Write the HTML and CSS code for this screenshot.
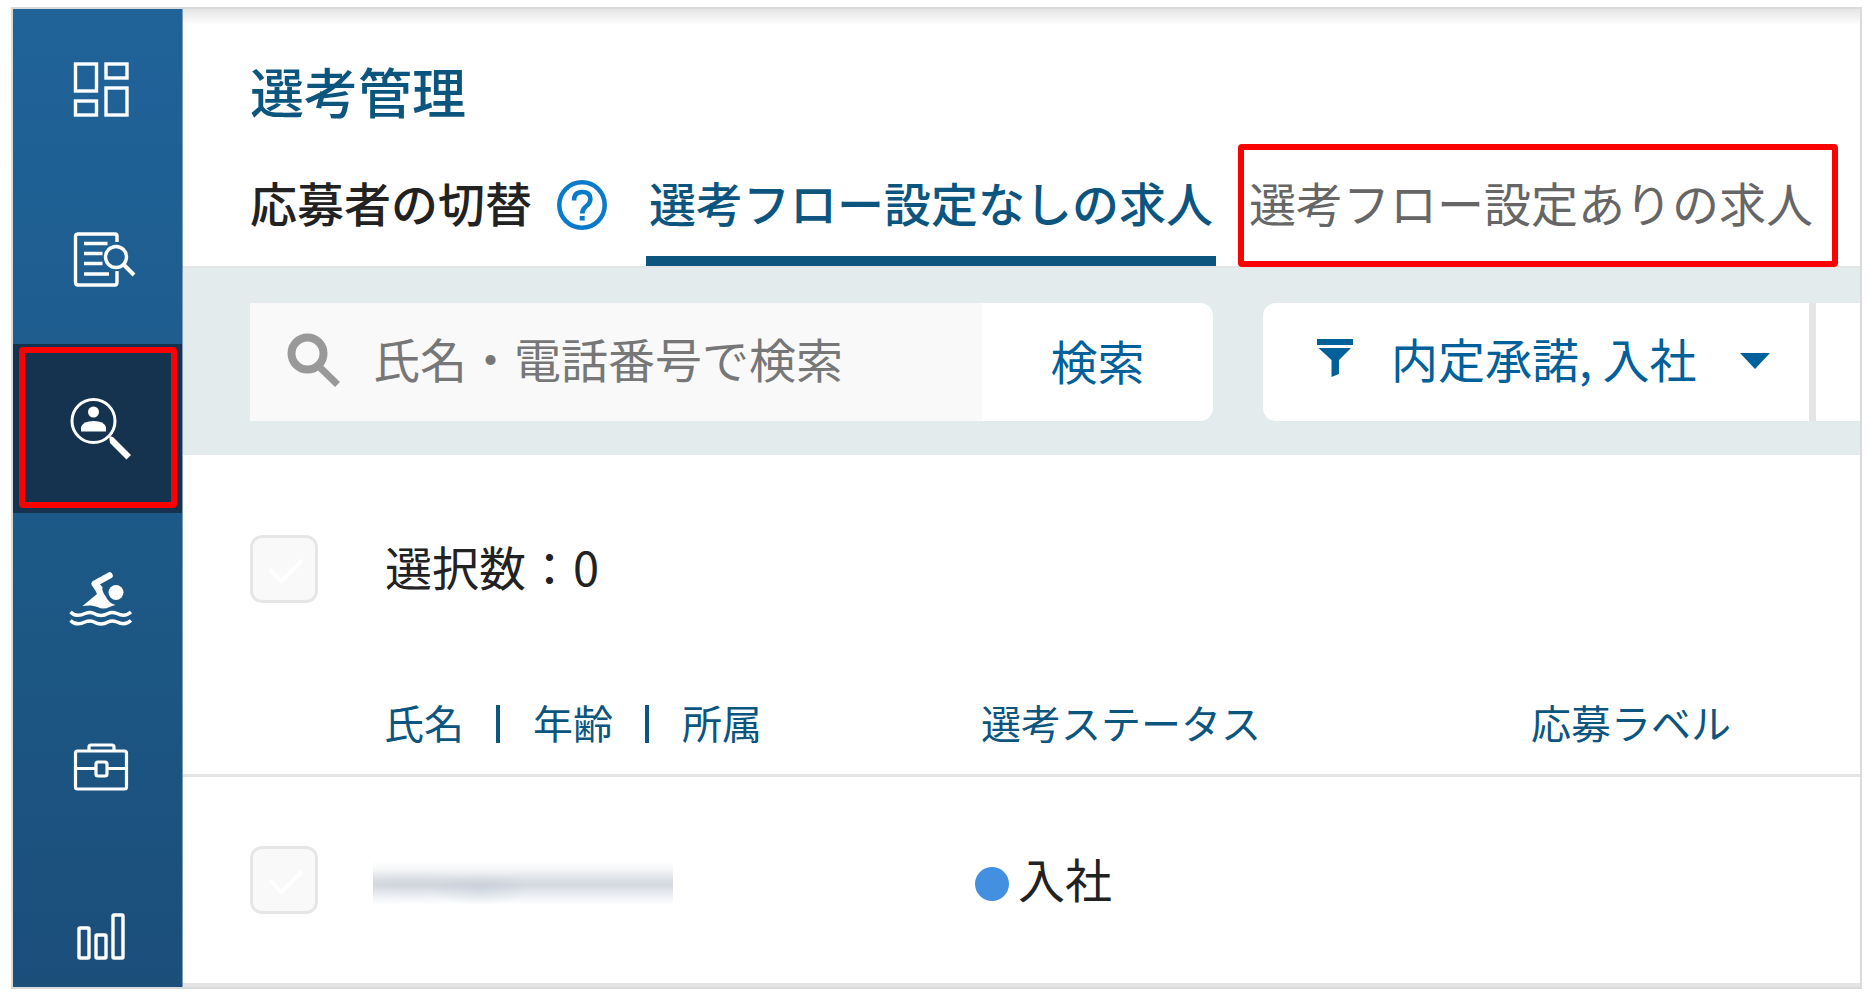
FILE: index.html
```
<!DOCTYPE html>
<html lang="ja">
<head>
  <meta charset="UTF-8">
  <meta name="viewport" content="width=device-width, initial-scale=1.0">
  <title>選考管理</title>
  <link rel="stylesheet" href="styles.css">
</head>
<body>
  <div class="frame">
    <nav class="sidebar">
      <a href="#" class="nav-item" aria-label="ダッシュボード">
        <svg width="64" height="64" viewBox="0 0 64 64" fill="none" stroke="#fff" stroke-width="3.4">
          <rect x="6.5" y="5" width="21" height="27"/>
          <rect x="6.5" y="42" width="21" height="14"/>
          <rect x="37" y="5" width="21" height="14"/>
          <rect x="37" y="29" width="21" height="27"/>
        </svg>
      </a>
      <a href="#" class="nav-item" aria-label="求人検索">
        <svg width="64" height="64" viewBox="0 0 64 64" fill="none" stroke="#fff" stroke-width="3.4">
          <path d="M48 14V8q0-2-2-2H9Q6.500 6 6.500 8V54q0 3 2.500 3H46q2 0 2-3V43"/>
          <path d="M15 15.500H38.500M15 25.500H33.500M15 35.500H33.500M15 46H40"/>
          <circle cx="47" cy="29" r="10.500"/>
          <path d="M55 37L65 47" stroke-width="4"/>
        </svg>
      </a>
      <a href="#" class="nav-item active" aria-label="選考管理">
        <svg width="64" height="64" viewBox="0 0 64 64" fill="none" stroke="#fff">
          <circle cx="24.500" cy="24" r="21.500" stroke-width="3"/>
          <circle cx="24.500" cy="15" r="5.500" fill="#fff" stroke="none"/>
          <path d="M12 34.500V30q2-6 12.500-6T37 30v4.500z" fill="#fff" stroke="none"/>
          <path d="M40 39l4 1 18 18-4.500 4.500L41 46z" fill="#fff" stroke="none"/>
        </svg>
        <span class="marker"></span>
      </a>
      <a href="#" class="nav-item" aria-label="インターン">
        <svg width="64" height="64" viewBox="0 1 64 64" fill="none" stroke="#fff" stroke-width="3.400">
          <path d="M26 18.500L40.500 10.500" stroke-width="6.500" stroke-linecap="round"/>
          <path d="M22.500 18l6-1 5 5q-1 4 3 9 3 7 10 9-4 1-6 2-6 3-12 0-5-2-8-1.500l-7 .5L28 29q-1-3-4-7-2-2-1.500-4z" fill="#fff" stroke="none"/>
          <circle cx="47" cy="27.500" r="7.500" fill="#fff" stroke="none"/>
          <path d="M1.500 47C6 51.500 12 50.500 16 48.500q5-2 9 0 7 4 14 0 4-2 9 0 8 4 14-1.500"/>
          <path d="M1.500 55.500C6 60 12 59 16 57q5-2 9 0 7 4 14 0 4-2 9 0 8 4 14-1.500"/>
        </svg>
      </a>
      <a href="#" class="nav-item" aria-label="求人管理">
        <svg width="64" height="64" viewBox="0 -1 64 64" fill="none" stroke="#fff" stroke-width="3.200">
          <rect x="6.500" y="15" width="51" height="38" rx="2"/>
          <path d="M20 15V11q0-2 2-2H43q2 0 2 2v4M7 32.500H27M38 32.500H57"/>
          <rect x="27" y="26" width="11" height="14" rx="2"/>
        </svg>
      </a>
      <a href="#" class="nav-item" aria-label="レポート">
        <svg width="64" height="64" viewBox="0 -1 64 64" fill="none" stroke="#fff" stroke-width="3.400">
          <rect x="10" y="23" width="10" height="30" rx="1"/>
          <rect x="27" y="30" width="10" height="23" rx="1"/>
          <rect x="44" y="10" width="10" height="43" rx="1"/>
        </svg>
      </a>
    </nav>

    <main class="main">
      <header class="header">
        <h1 class="title">選考管理</h1>
        <div class="tabs">
          <span class="tabs-label">応募者の切替</span>
          <button type="button" class="help" aria-label="ヘルプ">
            <svg width="50" height="50" viewBox="0 0 50 50" fill="none" stroke="#0a7bcb" stroke-width="4.500">
              <circle cx="25" cy="25" r="22.700"/>
              <path d="M17 20.500q0-8.500 8.200-8.500t8.200 7q0 4-4 7t-4.200 7.500"/>
              <path d="M25.200 36v4.500" stroke-width="5"/>
            </svg>
          </button>
          <a href="#" class="tab current">選考フロー設定なしの求人</a>
          <a href="#" class="tab">選考フロー設定ありの求人<span class="marker"></span></a>
        </div>
      </header>

      <div class="toolbar">
        <form class="search">
          <label class="search-field">
            <svg width="54" height="54" viewBox="0 0 54 54" fill="none" stroke="#999">
              <circle cx="20.500" cy="20.500" r="16" stroke-width="8"/>
              <path d="M32 33.500L50.500 51.500" stroke-width="7"/>
            </svg>
            <input type="text" placeholder="氏名・電話番号で検索">
          </label>
          <button type="submit" class="search-btn">検索</button>
        </form>
        <div class="filters">
          <label class="filter">
            <svg class="filter-icon" width="38" height="40" viewBox="0 0 38 40" fill="#00609a">
              <path d="M1 1H37V7H1zM2.500 10H35L23 22V36L15.500 39V22z"/>
            </svg>
            <select aria-label="ステータス">
              <option>内定承諾, 入社</option>
            </select>
            <svg class="caret" width="30" height="16" viewBox="0 0 30 16" fill="#00609a"><path d="M0 0H30L15 16z"/></svg>
          </label>
          <div class="filter-next"></div>
        </div>
      </div>

      <div class="selection">
        <input type="checkbox" class="check" id="checkAll">
        <label for="checkAll">選択数：0</label>
      </div>

      <table class="list">
        <colgroup>
          <col class="col-check">
          <col class="col-name">
          <col class="col-status">
          <col>
        </colgroup>
        <thead>
          <tr>
            <th></th>
            <th><div class="names"><span>氏名</span><span>年齢</span><span>所属</span></div></th>
            <th>選考ステータス</th>
            <th>応募ラベル</th>
          </tr>
        </thead>
        <tbody>
          <tr>
            <td class="cell-check"><input type="checkbox" class="check" aria-label="選択"></td>
            <td><div class="masked"></div></td>
            <td><div class="status"><span class="dot"></span>入社</div></td>
            <td></td>
          </tr>
        </tbody>
      </table>
    </main>
  </div>
</body>
</html>
```
FILE: styles.css
```
* {
  box-sizing: border-box;
}
body {
  margin: 0;
  padding: 7px 14px 17px 11px;
  height: 100vh;
  background: #fff;
  color: #222;
  font-family: "Noto Sans CJK JP", sans-serif;
  font-size: 47px;
  line-height: 64px;
}
a {
  color: inherit;
  text-decoration: none;
}
button, input, select {
  font: inherit;
  color: inherit;
  border: none;
  padding: 0;
  margin: 0;
  background: none;
}
.frame {
  display: flex;
  height: 100%;
  border: 2px solid #d9dadb;
  overflow: hidden;
}
.marker {
  position: absolute;
  border: 6px solid #f00;
  border-radius: 4px;
}

/* サイドバー */
.sidebar {
  flex: none;
  width: 170px;
  background: linear-gradient(#206399, #1c5784 65%, #1c4e7a);
  border-right: 1px solid #7d9dbb;
}
.nav-item {
  position: relative;
  display: flex;
  align-items: center;
  justify-content: center;
  height: 169px;
  padding-left: 6px;
}
.nav-item:first-child {
  margin-top: -3px;
}
.nav-item svg {
  overflow: visible;
}
.nav-item.active {
  background: #15324f;
}
.nav-item .marker {
  inset: 3px 5px 5px 6px;
}

/* ヘッダー */
.main {
  flex: 1;
  min-width: 0;
  overflow: hidden;
}
.header {
  padding: 50px 0 0 67px;
  border-bottom: 2px solid #e4e6e6;
  background: linear-gradient(#e4e4e4, #fff 16px);
}
.title {
  margin: 0;
  font-size: 54px;
  font-weight: 500;
  color: #0c557f;
}
.tabs {
  display: flex;
  align-items: center;
  margin-top: 15px;
  white-space: nowrap;
}
.tabs-label {
  font-weight: 500;
}
.help {
  display: flex;
  margin: 5px 39px 0 25px;
  cursor: pointer;
}
.tab {
  position: relative;
  padding: 32px 3px;
  color: #666;
}
.tab + .tab {
  margin-left: 30px;
}
.tab.current {
  color: #0c557f;
  font-weight: 500;
  box-shadow: inset 0 -10px #0c557f;
}
.tab .marker {
  inset: 6px -22px -1px -8px;
}

/* 検索とフィルター */
.toolbar {
  display: flex;
  gap: 50px;
  padding: 35px 0 34px 67px;
  background: #e3ebed;
  color: #00609a;
}
.search {
  display: flex;
  flex: none;
  height: 118px;
}
.search-field {
  display: flex;
  align-items: center;
  gap: 32px;
  width: 732px;
  padding: 0 38px 4px 37px;
  background: #f9f9f9;
}
.search-field input {
  flex: 1;
  min-width: 0;
  height: 64px;
  padding-bottom: 4px;
  outline: none;
  color: #222;
}
.search-field input::placeholder {
  color: #777;
  opacity: 1;
}
.search-btn {
  width: 231px;
  padding-bottom: 4px;
  background: #fff;
  border-radius: 0 13px 13px 0;
  cursor: pointer;
}
.filters {
  display: flex;
  flex: 1;
  min-width: 0;
}
.filter {
  display: flex;
  align-items: center;
  flex: none;
  width: 553px;
  padding: 0 39px 8px 53px;
  background: #fff;
  border-right: 7px solid #e5e5e5;
  border-radius: 13px 0 0 13px;
}
.filter select {
  flex: 1;
  margin-left: 37px;
  appearance: none;
  outline: none;
}
.filter-icon,
.caret {
  flex: none;
}
.caret {
  margin-top: 6px;
}
.filter-next {
  flex: 1;
  background: #fff;
}

/* 一覧 */
.selection {
  display: flex;
  align-items: center;
  gap: 67px;
  padding: 79px 0 79px 67px;
}
.selection label {
  padding-bottom: 6px;
}
.check {
  position: relative;
  display: block;
  width: 68px;
  height: 68px;
  appearance: none;
  background: #f9f9f9;
  border: 3px solid #e6e6e6;
  border-radius: 12px;
}
.check::after {
  content: "";
  position: absolute;
  left: 24px;
  top: 13px;
  width: 14px;
  height: 27px;
  border: solid #fff;
  border-width: 0 4px 4px 0;
  transform: rotate(45deg);
}
.list {
  width: 100%;
  table-layout: fixed;
  border-collapse: collapse;
}
.col-check {
  width: 201px;
}
.col-name {
  width: 597px;
}
.col-status {
  width: 550px;
}
.list th {
  padding: 7px 0 20px;
  font-size: 40px;
  font-weight: 400;
  text-align: left;
  color: #0c557f;
  border-bottom: 3px solid #e4e4e4;
}
.list td {
  height: 210px;
  padding: 0;
  border-bottom: 5px solid #e4e4e4;
}
.list .cell-check {
  padding-left: 67px;
}
.names {
  display: flex;
  align-items: center;
}
.names span + span::before {
  content: "";
  display: inline-block;
  width: 4px;
  height: 38px;
  margin: 0 33px 0 32px;
  vertical-align: -4px;
  background: #0c557f;
}
.masked {
  width: 300px;
  height: 44px;
  margin: 6px 0 0 -11px;
  background:
    radial-gradient(50px 16px at 108px 28px, rgba(160, 180, 200, 0.25), transparent),
    radial-gradient(60px 16px at 40px 24px, rgba(170, 175, 185, 0.12), transparent),
    linear-gradient(transparent, #f5f6f7 20%, #dcdfe4 42%, #d5d9e0 55%, #e6eaef 72%, #f7f8fa 90%, transparent);
}
.status {
  display: flex;
  align-items: center;
  gap: 9px;
  margin-left: -6px;
  padding-bottom: 4px;
}
.dot {
  width: 34px;
  height: 34px;
  margin-top: 12px;
  border-radius: 50%;
  background: #4490e0;
}
```
